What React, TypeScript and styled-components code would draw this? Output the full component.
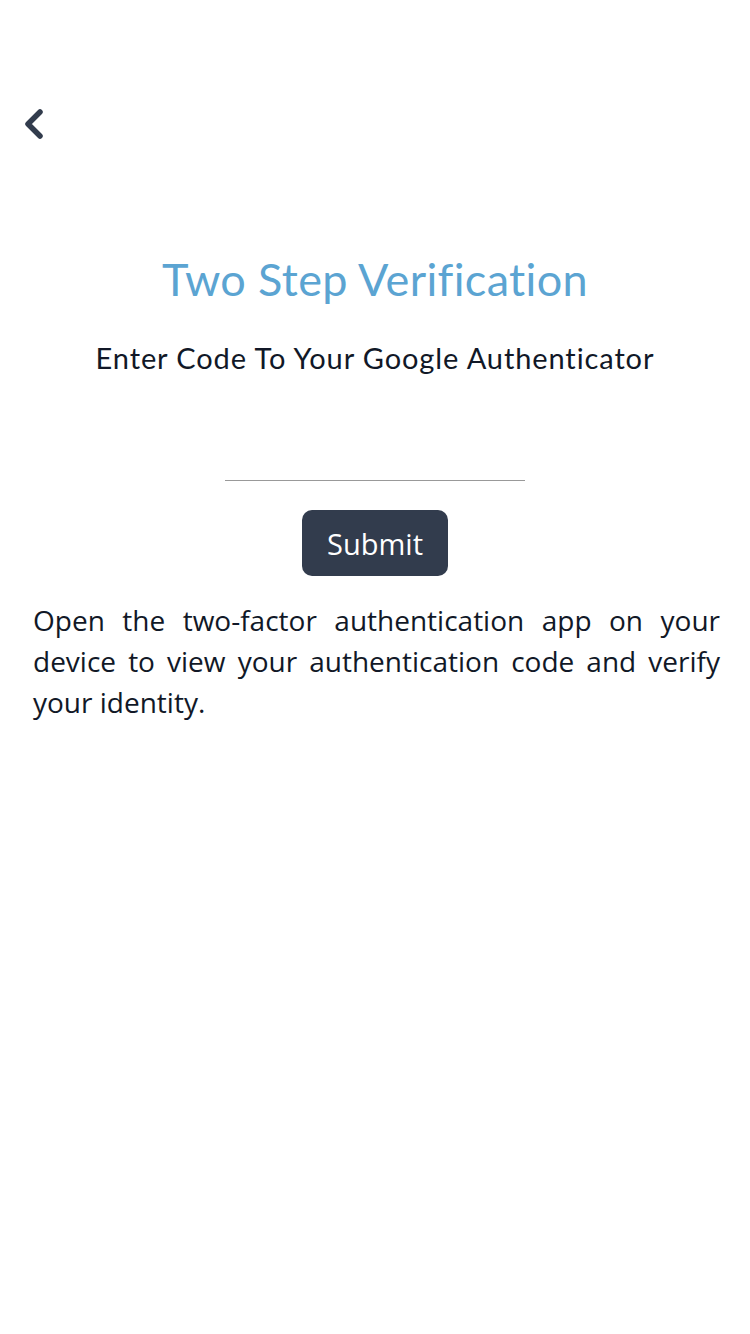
import React from "react";
import styled, { createGlobalStyle } from "styled-components";

const Global = createGlobalStyle`
  html, body { margin: 0; padding: 0; background: #ffffff; }
  body { font-family: "Nunito", "Lato", "Noto Sans", sans-serif; }
`;

const Page = styled.div`
  width: 750px;
  min-height: 1334px;
  box-sizing: border-box;
  padding: 104px 0 0 0;
  display: flex;
  flex-direction: column;
`;

const BackButton = styled.button`
  align-self: flex-start;
  margin-left: 19px;
  width: 30px;
  height: 40px;
  padding: 0;
  border: none;
  background: transparent;
  display: flex;
  align-items: center;
  justify-content: center;
  cursor: pointer;
`;

const Title = styled.h1`
  margin: 107px 0 0 0;
  text-align: center;
  font-family: "Lato", "Noto Sans", sans-serif;
  font-weight: 400;
  font-size: 45px;
  letter-spacing: 0.35px;
  line-height: 56px;
  color: #5ba4d2;
`;

const Subtitle = styled.p`
  margin: 33px 0 0 0;
  text-align: center;
  font-family: "Lato", "Noto Sans", sans-serif;
  font-size: 29px;
  letter-spacing: 0.9px;
  line-height: 36px;
  color: #111827;
`;

const CodeInput = styled.input`
  align-self: center;
  margin-top: 69px;
  width: 300px;
  height: 36px;
  box-sizing: border-box;
  border: none;
  border-bottom: 1px solid #999999;
  outline: none;
  background: transparent;
  font-size: 26px;
  text-align: center;
`;

const SubmitButton = styled.button`
  align-self: center;
  margin-top: 29px;
  width: 146px;
  height: 66px;
  border: none;
  border-radius: 10px;
  background: #323c4d;
  color: #ffffff;
  font-family: "Open Sans", "Noto Sans", sans-serif;
  font-size: 29px;
  cursor: pointer;
`;

const Help = styled.p`
  margin: 24px 30px 0 33px;
  text-align: justify;
  font-family: "Open Sans", "Noto Sans", sans-serif;
  font-size: 28px;
  line-height: 41px;
  color: #111827;
`;

export default function App() {
  return (
    <>
      <Global />
      <Page>
        <BackButton aria-label="Back">
          <svg width="26" height="36" viewBox="0 0 26 36">
            <path
              d="M19 6 L7 18 L19 30"
              fill="none"
              stroke="#323c4d"
              strokeWidth="5.5"
              strokeLinecap="round"
              strokeLinejoin="round"
            />
          </svg>
        </BackButton>
        <Title>Two Step Verification</Title>
        <Subtitle>Enter Code To Your Google Authenticator</Subtitle>
        <CodeInput type="text" aria-label="Code" />
        <SubmitButton>Submit</SubmitButton>
        <Help>
          Open the two-factor authentication app on your device to view your
          authentication code and verify your identity.
        </Help>
      </Page>
    </>
  );
}
